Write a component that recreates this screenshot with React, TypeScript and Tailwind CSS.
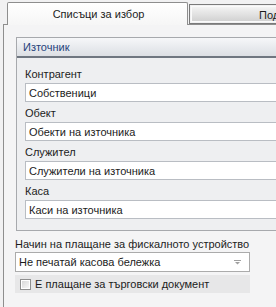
import React from "react";

function Arrow({ light }: { light?: boolean }) {
  return (
    <svg width="7" height="5" viewBox="0 0 7 5" className={light ? "text-[#a0a0a0]" : "text-[#6b6b6b]"}>
      <rect x="0" y="0" width="7" height="1" fill="currentColor" />
      <path d="M1 2 H6 L3.5 4.5 Z" fill="currentColor" />
    </svg>
  );
}

function Field({ label, value }: { label: string; value: string }) {
  return (
    <div className="flex flex-col">
      <div className="h-[14px] leading-[14px] mb-[2px]">{label}</div>
      <div className="h-[19px] bg-white border border-[#b9bdc3] flex items-center pl-[3px] pr-[5px]">
        <span className="flex-1 leading-[14px]">{value}</span>
        <Arrow />
      </div>
    </div>
  );
}

export default function App() {
  return (
    <div
      className="w-[276px] h-[307px] overflow-hidden bg-[#f1f1f2] pt-[2px] pl-[3px] text-[11px] text-[#1c1c1c]"
      style={{ fontFamily: '"Liberation Sans", Arial, sans-serif' }}
    >
      {/* tabs */}
      <div className="flex h-[22px] pl-[4px] w-[330px]">
        <div className="relative z-10 w-[181px] h-[23px] border border-b-0 border-[#8e8e8e] rounded-t-[2px] bg-gradient-to-b from-white to-[#f6f6f6] flex items-center justify-center pl-[2px]">
          Списъци за избор
        </div>
        <div className="ml-[1px] mt-[2px] h-[20px] w-[140px] border border-[#7a7a7a] p-px">
          <div className="h-full border border-[#fafafa] bg-gradient-to-b from-[#f3f3f3] to-[#d2d2d2] pl-[67px] leading-[16px] whitespace-nowrap">
            Подразбиране
          </div>
        </div>
      </div>

      {/* panel */}
      <div className="h-[300px] w-[330px] border-l border-t border-[#8e8e8e] bg-[#f4f4f5] pt-[12px]">
        <div className="ml-[12px] w-[300px] border border-[#a7a9ad] bg-[#eeeff1]">
          <div className="h-[20px] bg-gradient-to-b from-[#f6f7f9] to-[#dcdfe4] border-b-2 border-[#6f7680] pl-[6px] leading-[18px] text-[#26437c]">
            Източник
          </div>
          <div className="pl-[8px] pt-[9px] pb-[11px] flex flex-col gap-[4px]">
            <Field label="Контрагент" value="Собственици" />
            <Field label="Обект" value="Обекти на източника" />
            <Field label="Служител" value="Служители на източника" />
            <Field label="Каса" value="Каси на източника" />
          </div>
        </div>

        <div className="ml-[11px] mt-[6px] w-[235px]">
          <div className="h-[14px] leading-[14px] mb-[1px] whitespace-nowrap">
            Начин на плащане за фискалното устройство
          </div>
          <div className="h-[20px] bg-white border border-[#ababab] flex items-center pl-[3px] pr-[8px]">
            <span className="flex-1 leading-[14px]">Не печатай касова бележка</span>
            <Arrow light />
          </div>
          <div className="mt-[3px] h-[18px] bg-[#e7e7e8] flex items-center pl-[5px] gap-[4px]">
            <div className="w-[11px] h-[11px] border border-[#8f8f8f] p-px bg-white">
              <div className="w-full h-full bg-gradient-to-br from-[#d9d9d9] to-[#f7f7f7]" />
            </div>
            <span className="leading-[14px]">Е плащане за търговски документ</span>
          </div>
        </div>
      </div>
    </div>
  );
}
